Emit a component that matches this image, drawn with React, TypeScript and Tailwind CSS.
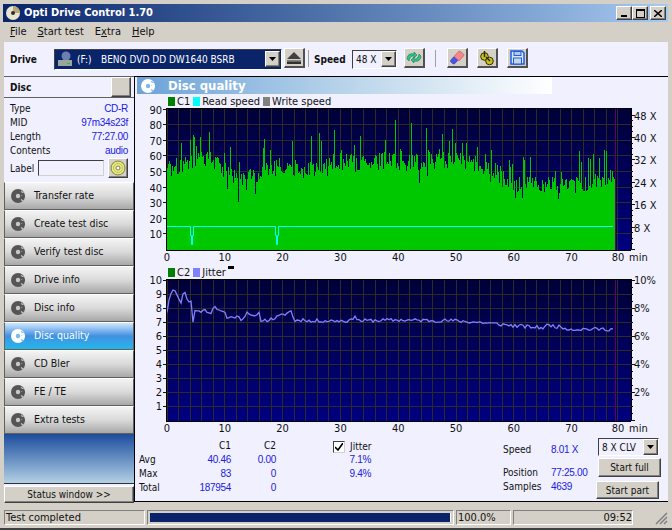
import React from 'react';

const raised = 'border border-t-white border-l-white border-b-[#404040] border-r-[#404040] shadow-[inset_-1px_-1px_0_#808080]';
const sunken = 'border border-t-[#808080] border-l-[#808080] border-b-white border-r-white';
const FONT = '"DejaVu Sans Condensed", "Liberation Sans", Arial, sans-serif';
const VALUE = "text-[#2020e0] font-['Liberation_Sans'] text-[10px] tracking-[-0.3px]";

// small pseudo random so the traces stay the same on every load
const makeRand = (seed: number) => () => {
  seed = (seed * 1664525 + 1013904223) % 4294967296;
  return seed / 4294967296;
};

const X0 = 167;
const PX_PER_MIN = 5.78;
const interp = (pts: number[][], m: number) => {
  for (let i = 1; i < pts.length; i++) {
    if (m <= pts[i][0]) {
      const [a, b] = [pts[i - 1], pts[i]];
      return a[1] + ((b[1] - a[1]) * (m - a[0])) / (b[0] - a[0] || 1);
    }
  }
  return pts[pts.length - 1][1];
};

const c1Base = [
  [0, 54], [2, 53], [4, 56], [6, 59], [8, 56], [10, 50], [12, 45], [14, 47], [16, 46], [18, 52], [20, 52], [22, 52],
  [24, 50], [26, 52], [28, 56], [30, 56], [32, 55], [34, 54], [36, 55], [38, 57], [40, 54], [44, 56], [48, 57], [52, 55],
  [56, 52], [58, 47], [60, 41], [65, 41], [70, 40], [74, 43], [78, 47],
];

const c1Path = () => {
  const r = makeRand(77);
  let d = '';
  for (let x = 0; x < 448; x++) {
    const m = x / PX_PER_MIN;
    let v = interp(c1Base, m) + (r() - 0.45) * 11;
    const k = r();
    if (k > 0.88) v += 5 + r() * 15;
    else if (k < 0.08) v -= 4 + r() * 7;
    if (x === 228) v = 83;
    const top = 249.5 - v * 1.56;
    d += `M${X0 + x + 0.5} 249.5V${top.toFixed(1)}`;
  }
  return d;
};

const jitterPts = [
  [0, 7.7], [0.2, 8.3], [0.5, 8.9], [1.2, 9.4], [2, 8.7], [2.5, 8.3], [2.8, 9.1], [3.2, 9.1], [3.6, 8.4], [4.2, 8.5], [4.3, 6.3],
  [4.5, 7], [4.8, 7.9], [6, 7.8], [7, 7.8], [7.4, 7.5], [8, 8.1], [10, 7.7], [10.3, 7.3], [12, 7.4], [13, 7.2], [14, 7.8], [15, 7.3],
  [16, 7.6], [16.3, 7.1], [18, 7.2], [20, 7.5], [21.5, 7.8], [22, 7.1], [24, 7.2], [25, 7], [26, 7.1], [32, 7.1], [32.4, 7.6], [33, 7.1],
  [40, 7.15], [50, 7.1], [55, 6.95], [60, 6.75], [65, 6.6], [66, 6.8], [70, 6.5], [78, 6.5],
];

const jitterLine = () => {
  const r = makeRand(11);
  const out: string[] = [];
  for (let x = 0; x < 448; x += 2) {
    const m = x / PX_PER_MIN;
    const noise = m < 4.6 ? 0 : (r() - 0.5) * 0.26;
    const y = 420.5 - (interp(jitterPts, m) + noise) * 14.05;
    out.push(`${X0 + x},${y.toFixed(1)}`);
  }
  return out.join(' ');
};

const gridV = Array.from({ length: 40 }, (_, i) => X0 + i * 2 * PX_PER_MIN);
const minuteLabels = [0, 10, 20, 30, 40, 50, 60, 70];

const Legend = ({ items }: { items: [string, string][] }) => (
  <div className="flex items-center gap-[2px] pl-[34px] h-[13px] text-[11px] leading-[13px] text-[#111]">
    {items.map(([color, label]) => (
      <React.Fragment key={label}>
        <span className="w-[7px] h-[9px]" style={{ background: color }} />
        <span className="mr-[1px]">{label}</span>
      </React.Fragment>
    ))}
  </div>
);

const TopChart = () => (
  <svg width="534" height="157" viewBox="134 108 534 157" className="block overflow-visible" fontFamily={FONT} fontSize="11" fill="#111">
    <defs>
      <linearGradient id="plotTop" x1="0" y1="0" x2="0" y2="1">
        <stop offset="0" stopColor="#000038" />
        <stop offset="1" stopColor="#000080" />
      </linearGradient>
    </defs>
    <rect x="166" y="108" width="465" height="142" fill="url(#plotTop)" />
    <g stroke="#2e2a26" shapeRendering="crispEdges">
      {gridV.map((x) => <line key={x} x1={x} x2={x} y1={108} y2={250} />)}
      {[1, 2, 3, 4, 5, 6, 7, 8].map((v) => <line key={v} x1={166} x2={631} y1={249.5 - v * 15.6} y2={249.5 - v * 15.6} />)}
    </g>
    <path d={c1Path()} stroke="#00c800" shapeRendering="crispEdges" />
    <line x1="615.5" x2="615.5" y1="108" y2="250" stroke="#600060" shapeRendering="crispEdges" />
    <polyline
      points="167,226.5 190.5,226.5 190.5,235.5 191.5,235.5 191.5,244.5 192.5,244.5 192.5,235.5 193.5,235.5 193.5,226.5 275.5,226.5 275.5,235.5 276.5,235.5 276.5,244.5 277.5,244.5 277.5,235.5 278.5,235.5 278.5,226.5 613,226.5"
      fill="none"
      stroke="#00ffff"
      strokeWidth="1"
    />
    <path d="M166 108H631M166 108V250M631 108V250M166 250H631" stroke="#000" shapeRendering="crispEdges" />
    {[90, 80, 70, 60, 50, 40, 30, 20, 10].map((v) => (
      <React.Fragment key={v}>
        <text x="162" y={254 - v * 1.56} textAnchor="end">{v}</text>
        <line x1="163" x2="167" y1={249.5 - v * 1.56} y2={249.5 - v * 1.56} stroke="#111" shapeRendering="crispEdges" />
      </React.Fragment>
    ))}
    {Array.from({ length: 25 }, (_, i) => (
      <line key={i} x1="631" x2={i % 4 === 0 ? 635 : 633} y1={249.5 - i * 5.6} y2={249.5 - i * 5.6} stroke="#111" shapeRendering="crispEdges" />
    ))}
    {[48, 40, 32, 24, 16, 8].map((v) => (
      <text key={v} x="634" y={254 - v * 2.8}>{v} X</text>
    ))}
    {minuteLabels.map((m) => (
      <text key={m} x={X0 + m * PX_PER_MIN} y="261" textAnchor="middle">{m}</text>
    ))}
    <text x="618" y="261" textAnchor="middle">80</text>
    <text x="629" y="261">min</text>
  </svg>
);

const BottomChart = () => (
  <svg width="534" height="155" viewBox="134 279 534 155" className="block overflow-visible" fontFamily={FONT} fontSize="11" fill="#111">
    <defs>
      <linearGradient id="plotBottom" x1="0" y1="0" x2="0" y2="1">
        <stop offset="0" stopColor="#000038" />
        <stop offset="1" stopColor="#000080" />
      </linearGradient>
    </defs>
    <rect x="166" y="279" width="465" height="142" fill="url(#plotBottom)" />
    <g stroke="#2e2a26" shapeRendering="crispEdges">
      {gridV.map((x) => <line key={x} x1={x} x2={x} y1={279} y2={421} />)}
      {[1, 2, 3, 4, 5, 6, 7, 8, 9].map((v) => <line key={v} x1={166} x2={631} y1={420.5 - v * 14.05} y2={420.5 - v * 14.05} />)}
    </g>
    <line x1="615.5" x2="615.5" y1="279" y2="421" stroke="#600060" shapeRendering="crispEdges" />
    <polyline points={jitterLine()} fill="none" stroke="#8080ff" strokeWidth="1.3" />
    <path d="M166 279H631M166 279V421M631 279V421M166 421H631" stroke="#000" shapeRendering="crispEdges" />
    {[10, 9, 8, 7, 6, 5, 4, 3, 2, 1].map((v) => (
      <React.Fragment key={v}>
        <text x="162" y={424.5 - v * 14.05} textAnchor="end">{v}</text>
        <line x1="163" x2="167" y1={420.5 - v * 14.05} y2={420.5 - v * 14.05} stroke="#111" shapeRendering="crispEdges" />
      </React.Fragment>
    ))}
    {Array.from({ length: 21 }, (_, i) => (
      <line key={i} x1="631" x2={i % 4 === 0 ? 635 : 633} y1={420.5 - i * 7.025} y2={420.5 - i * 7.025} stroke="#111" shapeRendering="crispEdges" />
    ))}
    {[10, 8, 6, 4, 2].map((v) => (
      <text key={v} x="634" y={424.5 - v * 14.05}>{v}%</text>
    ))}
    {minuteLabels.map((m) => (
      <text key={m} x={X0 + m * PX_PER_MIN} y="432" textAnchor="middle">{m}</text>
    ))}
    <text x="618" y="432" textAnchor="middle">80</text>
    <text x="629" y="432">min</text>
  </svg>
);

const DiscIcon = ({ light }: { light?: boolean }) => {
  const c = light ? '#ffffff' : '#555555';
  const h = light ? '#7db8ea' : '#c8c8c8';
  return (
    <svg width="18" height="16" viewBox="0 0 18 16" className="shrink-0">
      <circle cx="8" cy="8" r="7" fill={c} />
      <circle cx="8" cy="8" r="2.2" fill={h} />
      <path d="M11 3.5l2.5 1.2M11.5 7.5h3M11 11.5l2 1.5" stroke={h} strokeWidth="1.2" />
      <circle cx="13.5" cy="8" r="1.6" fill={c} />
    </svg>
  );
};

const ArrowDown = () => (
  <svg width="7" height="4" viewBox="0 0 7 4"><path d="M0 0h7L3.5 4z" fill="#000" /></svg>
);

const DropBtn = () => (
  <span className={`flex items-center justify-center w-[15px] h-[16px] shrink-0 bg-[#d4d0c8] ${raised}`}><ArrowDown /></span>
);

const ToolBtn = ({ children }: { children: React.ReactNode }) => (
  <button className={`flex items-center justify-center w-[21px] h-[20px] bg-[#d4d0c8] border border-t-white border-l-white border-b-2 border-r-2 border-b-[#505050] border-r-[#505050]`}>{children}</button>
);

const navItems = ['Transfer rate', 'Create test disc', 'Verify test disc', 'Drive info', 'Disc info', 'Disc quality', 'CD Bler', 'FE / TE', 'Extra tests'];

const Info = ({ k, v }: { k: string; v: string }) => (
  <div className="flex justify-between items-baseline h-[14px] leading-[14px]">
    <span className="text-[#111]">{k}</span>
    <span className={VALUE}>{v}</span>
  </div>
);

const statRows = [
  ['Avg', '40.46', '0.00'],
  ['Max', '83', '0'],
  ['Total', '187954', '0'],
];

export default function App() {
  return (
    <div className="w-[672px] h-[530px] flex flex-col overflow-hidden bg-[#d4d0c8] pt-[4px] px-[4px] pb-[2px] text-[10px] text-[#111] border-b-2 border-b-[#404040]" style={{ fontFamily: FONT }}>
      {/* title bar */}
      <div className="h-[18px] shrink-0 flex items-center -ml-[1px] pl-[2px] pr-[2px] bg-gradient-to-r from-[#0a246a] to-[#a6caf0]">
        <svg width="16" height="16" viewBox="0 0 16 16" className="shrink-0">
          <circle cx="8" cy="8" r="7" fill="#e8e4d0" />
          <path d="M8 1a7 7 0 0 1 7 7H8z" fill="#b8a878" />
          <circle cx="8" cy="8" r="2" fill="#303030" />
        </svg>
        <span className="ml-[3px] text-white font-bold text-[11px]">Opti Drive Control 1.70</span>
        <div className="ml-auto flex">
          <button className={`w-[16px] h-[14px] bg-[#d4d0c8] flex items-end justify-center pb-[2px] ${raised}`}><span className="block w-[6px] h-[2px] bg-black" /></button>
          <button className={`w-[16px] h-[14px] bg-[#d4d0c8] flex items-center justify-center ${raised}`}><span className="block w-[9px] h-[9px] border border-black border-t-2" /></button>
          <button className={`ml-[2px] w-[16px] h-[14px] bg-[#d4d0c8] flex items-center justify-center ${raised}`}>
            <svg width="8" height="7" viewBox="0 0 8 7"><path d="M0 0l8 7M8 0L0 7" stroke="#000" strokeWidth="1.5" /></svg>
          </button>
        </div>
      </div>

      {/* menu */}
      <div className="h-[20px] shrink-0 flex items-center gap-[11px] pl-[6px] text-[11px]">
        <span><u>F</u>ile</span>
        <span><u>S</u>tart test</span>
        <span>E<u>x</u>tra</span>
        <span><u>H</u>elp</span>
      </div>

      {/* toolbar */}
      <div className="h-[34px] shrink-0 flex items-center bg-[#f0f0ff] pl-[6px]">
        <span className="font-bold w-[44px]">Drive</span>
        <div className="w-[228px] h-[21px] flex items-center bg-[#0a246a] border border-t-[#404040] border-l-[#404040] border-b-white border-r-white text-white pl-[2px] pr-px">
          <svg width="16" height="16" viewBox="0 0 16 16" className="shrink-0">
            <circle cx="9" cy="5" r="4.5" fill="#6d7fb0" />
            <rect x="1" y="9" width="14" height="6" fill="#9aa5a0" />
            <rect x="10" y="12" width="3" height="1" fill="#30c030" />
          </svg>
          <span className="ml-[4px] w-[24px] shrink-0">(F:)</span>
          <span className="flex-1 whitespace-nowrap">BENQ DVD DD DW1640 BSRB</span>
          <DropBtn />
        </div>
        <span className="ml-[2px] -mt-[2px]">
          <ToolBtn>
            <svg width="16" height="14" viewBox="0 0 16 14">
              <path d="M8 1l7 7H1z" fill="#404040" />
              <rect x="1" y="9" width="14" height="1.5" fill="#808080" />
              <rect x="1" y="10.5" width="14" height="2.5" fill="#303030" />
            </svg>
          </ToolBtn>
        </span>
        <span className="ml-[3px] w-px h-[17px] -mt-[2px] bg-[#a0a0a0]" />
        <span className="ml-[5px] font-bold w-[38px]">Speed</span>
        <div className="w-[45px] h-[19px] flex items-center justify-between pl-[3px] bg-[#f0f0ff] border border-t-[#404040] border-l-[#404040] border-b-white border-r-white">
          <span>48 X</span><DropBtn />
        </div>
        <span className="ml-[7px] -mt-[2px]">
          <ToolBtn>
            <svg width="16" height="15" viewBox="0 0 16 15">
              <path d="M1 9C1 5 4 3 8 4V2l3 3-3 3V6C5 6 4 7 3 11z" fill="#30c080" stroke="#0e6a4a" strokeWidth=".5" />
              <path d="M15 6c0 4-3 6-7 5v2l-3-3 3-3v2c3 0 4-1 5-5z" fill="#30c080" stroke="#0e6a4a" strokeWidth=".5" />
            </svg>
          </ToolBtn>
        </span>
        <span className="ml-[10px] w-px h-[17px] -mt-[2px] bg-[#a0a0a0]" />
        <span className="ml-[11px] -mt-[2px]">
          <ToolBtn>
            <svg width="16" height="15" viewBox="0 0 16 15">
              <path d="M1.5 10.5L5 6.5l4 3.5-3 3.5c-1 .7-2 .5-2.5 0L2 12c-.6-.5-.8-1-.5-1.500z" fill="#4a54e8" stroke="#20208a" strokeWidth=".5" />
              <path d="M5 6.500L9.500 1.500c.6-.6 1.400-.6 2 0L14.500 4c.6.6.6 1.300 0 2L10 11z" fill="#f4868c" stroke="#b04850" strokeWidth=".5" />
            </svg>
          </ToolBtn>
        </span>
        <span className="ml-[9px] -mt-[2px]">
          <ToolBtn>
            <svg width="16" height="16" viewBox="0 0 16 16">
              <circle cx="5.500" cy="6.500" r="3.800" fill="#c8c020" stroke="#302c00" />
              <circle cx="10.500" cy="11" r="3.800" fill="#c8c020" stroke="#302c00" />
              <path d="M5.500 1v6M7 7l4 4" stroke="#302c00" strokeWidth="1.500" />
            </svg>
          </ToolBtn>
        </span>
        <span className="ml-[9px] -mt-[2px]">
          <ToolBtn>
            <svg width="15" height="15" viewBox="0 0 15 15">
              <path d="M1 1h11l2 2v11H1z" fill="#d8e8ff" stroke="#1e5ce0" strokeWidth="1.500" />
              <rect x="4" y="1.500" width="7" height="4" fill="#b8c8e8" stroke="#1e5ce0" />
              <rect x="3.500" y="8" width="8" height="6" fill="#c8d4e8" stroke="#1e5ce0" />
            </svg>
          </ToolBtn>
        </span>
      </div>

      {/* body */}
      <div className="h-[426px] shrink-0 flex bg-[#f0f0ff]">
        <div className="w-[130px] shrink-0 flex flex-col">
          <div className="h-[22px] shrink-0 flex items-center justify-between pl-[6px] pr-[3px] bg-[#f0f0ff] border-t border-t-[#606060] border-b border-b-[#606060]">
            <span className="font-bold">Disc</span>
            <span className={`w-[20px] h-[20px] bg-[#d4d0c8] ${raised}`} />
          </div>
          <div className="h-[84px] shrink-0 pt-[4px] px-[6px]">
            <Info k="Type" v="CD-R" />
            <Info k="MID" v="97m34s23f" />
            <Info k="Length" v="77:27.00" />
            <Info k="Contents" v="audio" />
            <div className="flex items-center">
              <span className="w-[28px]">Label</span>
              <span className="w-[67px] h-[16px] bg-[#f0f0ff] border border-t-[#404040] border-l-[#404040] border-b-[#d4d0c8] border-r-[#d4d0c8]" />
              <span className={`ml-[4px] w-[20px] h-[20px] flex items-center justify-center bg-[#d4d0c8] ${raised}`}>
                <svg width="16" height="16" viewBox="0 0 16 16">
                  <circle cx="8" cy="8" r="7" fill="#e8e880" stroke="#808040" />
                  <circle cx="8" cy="8" r="4.500" fill="none" stroke="#c0c060" />
                  <circle cx="8" cy="8" r="2" fill="#fff" stroke="#808040" />
                </svg>
              </span>
            </div>
          </div>
          {navItems.map((label) => {
            const active = label === 'Disc quality';
            return (
              <div
                key={label}
                className={`h-[28px] shrink-0 flex items-center pl-[5px] gap-[5px] text-[10.5px] border border-[#606060] border-t-white ${active ? 'bg-gradient-to-b from-[#cfe6fb] via-[#3f90e2] to-[#20b8ea] text-white' : 'bg-gradient-to-b from-[#f4f4f4] via-[#dadada] to-[#a8a8a8]'}`}
              >
                <DiscIcon light={active} />
                <span className="ml-[1px]">{label}</span>
              </div>
            );
          })}
          <div className="h-[50px] shrink-0 bg-gradient-to-b from-[#1d4c9c] to-[#b4d0e4] border-b border-b-[#303030]" />
          <button className={`h-[17px] mt-[2px] shrink-0 bg-[#d4d0c8] text-center leading-[14px] ${raised}`}>Status window &gt;&gt;</button>
        </div>

        <div className="flex-1 min-w-0 flex flex-col border-t border-l border-black">
          <div className="h-[17px] shrink-0 w-[415px] ml-[2px] flex items-center pl-[3px] bg-gradient-to-r from-[#6ca2d8] via-[#b8d4ea] to-white">
            <DiscIcon light />
            <span className="ml-[10px] text-white font-bold text-[13px] leading-[17px]">Disc quality</span>
          </div>
          <div className="h-px shrink-0" />
          <div className="-ml-px">
            <Legend items={[['#008000', 'C1'], ['#00ffff', 'Read speed'], ['#808080', 'Write speed']]} />
            <TopChart />
            <div className="relative h-[14px] pt-[1px]">
              <Legend items={[['#008000', 'C2'], ['#8080ff', 'Jitter']]} />
              <span className="absolute left-[94px] top-[1px] w-[6px] h-[3px] bg-black" />
            </div>
            <BottomChart />
          </div>

          <div className="flex-1 min-h-0 flex border-b border-black">
            <div className="w-[197px] shrink-0 pl-[4px] pt-[5px]">
              <div className="grid grid-cols-[34px_58px_45px] items-baseline leading-[14px]">
                <span /><span className="text-right">C1</span><span className="text-right">C2</span>
                {statRows.map(([k, a, b]) => (
                  <React.Fragment key={k}>
                    <span>{k}</span>
                    <span className={`text-right ${VALUE}`}>{a}</span>
                    <span className={`text-right ${VALUE}`}>{b}</span>
                  </React.Fragment>
                ))}
              </div>
            </div>
            <div className="w-[60px] shrink-0 pt-[6px] leading-[14px]">
              <div className="flex items-center gap-[5px] h-[13px]">
                <span className="w-[12px] h-[12px] ml-px bg-white flex items-center justify-center border border-t-[#404040] border-l-[#404040] border-b-[#d4d0c8] border-r-[#d4d0c8]">
                  <svg width="8" height="8" viewBox="0 0 8 8"><path d="M0 4l3 3 5-7" fill="none" stroke="#000" strokeWidth="1.6" /></svg>
                </span>
                <span>Jitter</span>
              </div>
              <div className={`text-right w-[39px] ${VALUE}`}>7.1%</div>
              <div className={`text-right w-[39px] ${VALUE}`}>9.4%</div>
            </div>
            <div className="w-[95px] shrink-0 ml-[111px] pt-[9px] leading-[14px]">
              <div className="flex items-baseline"><span className="w-[48px]">Speed</span><span className={VALUE}>8.01 X</span></div>
              <div className="flex items-baseline mt-[9px]"><span className="w-[48px]">Position</span><span className={VALUE}>77:25.00</span></div>
              <div className="flex items-baseline"><span className="w-[48px]">Samples</span><span className={VALUE}>4639</span></div>
            </div>
            <div className="w-[66px] shrink-0 flex flex-col pt-[4px] -ml-[2px]">
              <div className="ml-[2px] w-[61px] h-[18px] flex items-center justify-between pl-[3px] border border-t-[#404040] border-l-[#404040] border-b-white border-r-white">
                <span className="whitespace-nowrap">8 X CLV</span><DropBtn />
              </div>
              <button className={`ml-[2px] mt-[2px] w-[63px] h-[19px] bg-[#d4d0c8] ${raised}`}>Start full</button>
              <button className={`mt-[4px] w-[63px] h-[18px] bg-[#d4d0c8] ${raised}`}>Start part</button>
            </div>
          </div>
        </div>
      </div>

      {/* status bar */}
      <div className="mt-[8px] h-[15px] shrink-0 flex gap-[2px] text-[11px] leading-[13px]">
        <div className={`w-[141px] pl-[1px] ${sunken}`}>Test completed</div>
        <div className={`w-[307px] p-[2px] ${sunken}`}>
          <div className="h-full w-full bg-[#0a246a] border-r border-white" />
        </div>
        <div className={`w-[55px] pl-[1px] ${sunken}`}>100.0%</div>
        <div className={`w-[120px] text-right ${sunken}`}>09:52</div>
        <svg width="14" height="14" viewBox="0 0 14 14" className="ml-auto self-end">
          <path d="M13 2L2 13M13 6L6 13M13 10l-3 3" stroke="#808080" strokeWidth="1.5" />
        </svg>
      </div>
    </div>
  );
}
